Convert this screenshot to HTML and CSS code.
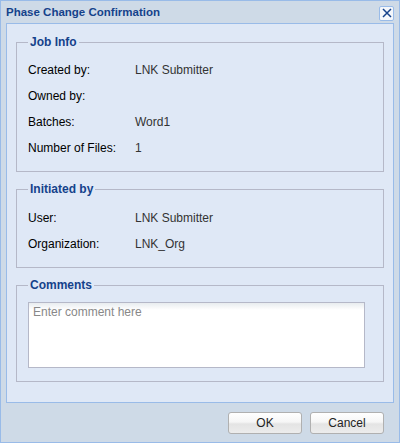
FILE: index.html
```html
<!DOCTYPE html>
<html lang="en">
<head>
    <meta charset="UTF-8">
    <title>Phase Change Confirmation</title>
    <link rel="stylesheet" href="styles.css">
</head>
<body>

<div class="window">
    <div class="window-header">
        <span class="window-title">Phase Change Confirmation</span>
        <span class="close-btn">
            <svg width="10" height="10" viewBox="0 0 10 10">
                <path d="M1 1 L9 9 M9 1 L1 9" stroke="#15428b" stroke-width="1.5" fill="none"/>
            </svg>
        </span>
    </div>

    <div class="window-body">
        <fieldset class="group group-job">
            <legend>Job Info</legend>
            <div class="row"><span class="label">Created by:</span><span class="value">LNK Submitter</span></div>
            <div class="row"><span class="label">Owned by:</span><span class="value"></span></div>
            <div class="row"><span class="label">Batches:</span><span class="value">Word1</span></div>
            <div class="row"><span class="label">Number of Files:</span><span class="value">1</span></div>
        </fieldset>

        <fieldset class="group group-init">
            <legend>Initiated by</legend>
            <div class="row"><span class="label">User:</span><span class="value">LNK Submitter</span></div>
            <div class="row"><span class="label">Organization:</span><span class="value">LNK_Org</span></div>
        </fieldset>

        <fieldset class="group group-comments">
            <legend>Comments</legend>
            <textarea class="comment" placeholder="Enter comment here"></textarea>
        </fieldset>
    </div>

    <div class="window-footer">
        <button type="button" class="btn">OK</button>
        <button type="button" class="btn">Cancel</button>
    </div>
</div>

</body>
</html>
```

FILE: styles.css
```css
body {
    margin: 0;
    padding: 0;
    font-family: "Liberation Sans", Arial, sans-serif;
    font-size: 12px;
    color: #222;
    background-color: #fff;
}
.window {
    width: 400px;
    height: 443px;
    box-sizing: border-box;
    border: 1px solid #99bbe8;
    background-color: #cedae7;
    display: flex;
    flex-direction: column;
}
.window-header {
    height: 22px;
    display: flex;
    align-items: center;
    justify-content: space-between;
    padding: 0 5px 0 5px;
}
.window-title {
    font-weight: bold;
    font-size: 11.5px;
    color: #15428b;
}
.close-btn {
    width: 13px;
    height: 13px;
    border: 1px solid #99bbe8;
    border-radius: 2px;
    background-color: #f4f7fb;
    display: flex;
    align-items: center;
    justify-content: center;
    margin-top: 2px;
}
.window-body {
    margin: 0 5px;
    height: 378px;
    border: 1px solid #99bbe8;
    background-color: #dfe8f6;
    padding: 0 9px;
}
.group {
    margin: 11px 0 0;
    padding: 0 10px 0 11px;
    border: 1px solid #b5b8c8;
}
.group legend {
    font-weight: bold;
    font-size: 12px;
    color: #15428b;
    padding: 0 2px;
    margin-left: 0;
}
.group-job {
    height: 127px;
    padding-top: 8px;
}
.group-init {
    margin-top: 10px;
    height: 75px;
    padding-top: 9px;
}
.group-comments {
    margin-top: 10px;
    height: 92px;
    padding-top: 10px;
}
.row {
    display: flex;
    height: 26px;
    align-items: center;
}
.label {
    width: 107px;
    color: #000;
}
.value {
    color: #333;
}
.comment {
    display: block;
    width: 337px;
    height: 66px;
    box-sizing: border-box;
    border: 1px solid #b5b8c8;
    background: linear-gradient(#e8ecef, #fff 7px);
    padding: 2px 4px;
    font-family: "Liberation Sans", Arial, sans-serif;
    font-size: 12px;
    resize: none;
}
.comment::placeholder {
    color: #888;
}
.window-footer {
    flex: 1;
    display: flex;
    justify-content: flex-end;
    align-items: center;
    gap: 8px;
    padding-right: 15px;
}
.btn {
    width: 74px;
    height: 22px;
    border: 1px solid #b0b0b0;
    border-radius: 3px;
    background: linear-gradient(#fff 0%, #f6f6f6 45%, #e4e4e4 55%, #ececec 100%);
    font-family: "Liberation Sans", Arial, sans-serif;
    font-size: 12px;
    color: #222;
    padding: 0;
}
```
